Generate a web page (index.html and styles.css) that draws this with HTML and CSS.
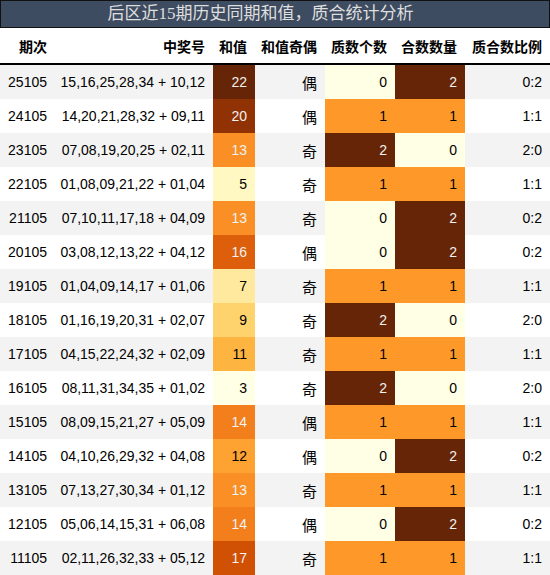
FILE: index.html
```html
<!DOCTYPE html>
<html lang="zh-CN">
<head>
    <meta charset="UTF-8">
    <title>后区近15期历史同期和值，质合统计分析</title>
    <link rel="stylesheet" href="styles.css">
</head>
<body>
    <table class="stats">
        <caption class="title">后区近15期历史同期和值，质合统计分析</caption>
        <colgroup>
            <col class="c-issue">
            <col class="c-nums">
            <col class="c-sum">
            <col class="c-parity">
            <col class="c-prime">
            <col class="c-comp">
            <col class="c-ratio">
        </colgroup>
        <thead>
            <tr>
                <th>期次</th>
                <th>中奖号</th>
                <th>和值</th>
                <th>和值奇偶</th>
                <th>质数个数</th>
                <th>合数数量</th>
                <th>质合数比例</th>
            </tr>
        </thead>
        <tbody>
            <tr><td>25105</td><td>15,16,25,28,34 + 10,12</td><td class="s22 light">22</td><td>偶</td><td class="g0">0</td><td class="g2 light">2</td><td>0:2</td></tr>
            <tr><td>24105</td><td>14,20,21,28,32 + 09,11</td><td class="s20 light">20</td><td>偶</td><td class="g1">1</td><td class="g1">1</td><td>1:1</td></tr>
            <tr><td>23105</td><td>07,08,19,20,25 + 02,11</td><td class="s13 light">13</td><td>奇</td><td class="g2 light">2</td><td class="g0">0</td><td>2:0</td></tr>
            <tr><td>22105</td><td>01,08,09,21,22 + 01,04</td><td class="s5">5</td><td>奇</td><td class="g1">1</td><td class="g1">1</td><td>1:1</td></tr>
            <tr><td>21105</td><td>07,10,11,17,18 + 04,09</td><td class="s13 light">13</td><td>奇</td><td class="g0">0</td><td class="g2 light">2</td><td>0:2</td></tr>
            <tr><td>20105</td><td>03,08,12,13,22 + 04,12</td><td class="s16 light">16</td><td>偶</td><td class="g0">0</td><td class="g2 light">2</td><td>0:2</td></tr>
            <tr><td>19105</td><td>01,04,09,14,17 + 01,06</td><td class="s7">7</td><td>奇</td><td class="g1">1</td><td class="g1">1</td><td>1:1</td></tr>
            <tr><td>18105</td><td>01,16,19,20,31 + 02,07</td><td class="s9">9</td><td>奇</td><td class="g2 light">2</td><td class="g0">0</td><td>2:0</td></tr>
            <tr><td>17105</td><td>04,15,22,24,32 + 02,09</td><td class="s11">11</td><td>奇</td><td class="g1">1</td><td class="g1">1</td><td>1:1</td></tr>
            <tr><td>16105</td><td>08,11,31,34,35 + 01,02</td><td class="s3">3</td><td>奇</td><td class="g2 light">2</td><td class="g0">0</td><td>2:0</td></tr>
            <tr><td>15105</td><td>08,09,15,21,27 + 05,09</td><td class="s14 light">14</td><td>偶</td><td class="g1">1</td><td class="g1">1</td><td>1:1</td></tr>
            <tr><td>14105</td><td>04,10,26,29,32 + 04,08</td><td class="s12">12</td><td>偶</td><td class="g0">0</td><td class="g2 light">2</td><td>0:2</td></tr>
            <tr><td>13105</td><td>07,13,27,30,34 + 01,12</td><td class="s13 light">13</td><td>奇</td><td class="g1">1</td><td class="g1">1</td><td>1:1</td></tr>
            <tr><td>12105</td><td>05,06,14,15,31 + 06,08</td><td class="s14 light">14</td><td>偶</td><td class="g0">0</td><td class="g2 light">2</td><td>0:2</td></tr>
            <tr><td>11105</td><td>02,11,26,32,33 + 05,12</td><td class="s17 light">17</td><td>奇</td><td class="g1">1</td><td class="g1">1</td><td>1:1</td></tr>
        </tbody>
    </table>
</body>
</html>
```

FILE: styles.css
```css
body {
    margin: 0;
    background-color: #ffffff;
    font-family: 'Liberation Sans', 'Noto Sans CJK SC', sans-serif;
    font-size: 14px;
    color: #000;
}
.stats {
    width: 550px;
    border-collapse: collapse;
    table-layout: fixed;
}
.title {
    height: 26px;
    line-height: 26px;
    padding-right: 29px;
    background-color: #3e4c61;
    border: 1px solid #111;
    color: #dedede;
    font-family: 'Liberation Serif', 'Noto Sans CJK SC', serif;
    font-size: 17px;
    text-align: center;
    white-space: nowrap;
}
.c-issue { width: 55px; }
.c-nums { width: 158px; }
.c-sum { width: 42px; }
.c-parity { width: 70px; }
.c-prime { width: 70px; }
.c-comp { width: 70px; }
.c-ratio { width: 85px; }
th, td {
    padding: 0 8px 0 0;
    text-align: right;
    white-space: nowrap;
    overflow: hidden;
}
th {
    height: 35px;
    font-family: 'Noto Sans CJK SC', sans-serif;
    font-weight: bold;
    border-bottom: 2px solid #000;
}
td {
    height: 34px;
}
tbody tr:nth-child(odd) {
    background-color: #f3f3f3;
}
tbody tr:nth-child(even) {
    background-color: #ffffff;
}
td:nth-child(4) {
    font-family: 'Noto Sans CJK SC', sans-serif;
    font-size: 15px;
}
.light { color: #f1f1f1; }

/* sum gradient */
.s3 { background-color: #ffffe5; }
.s5 { background-color: #fff8c3; }
.s7 { background-color: #fee99f; }
.s9 { background-color: #fed36e; }
.s11 { background-color: #feb441; }
.s12 { background-color: #fea231; }
.s13 { background-color: #fa9025; }
.s14 { background-color: #f37f1c; }
.s16 { background-color: #dd5f0c; }
.s17 { background-color: #d05004; }
.s20 { background-color: #913204; }
.s22 { background-color: #662506; }

/* prime / composite gradient */
.g0 { background-color: #ffffe5; }
.g1 { background-color: #fe9929; }
.g2 { background-color: #662506; }
```
